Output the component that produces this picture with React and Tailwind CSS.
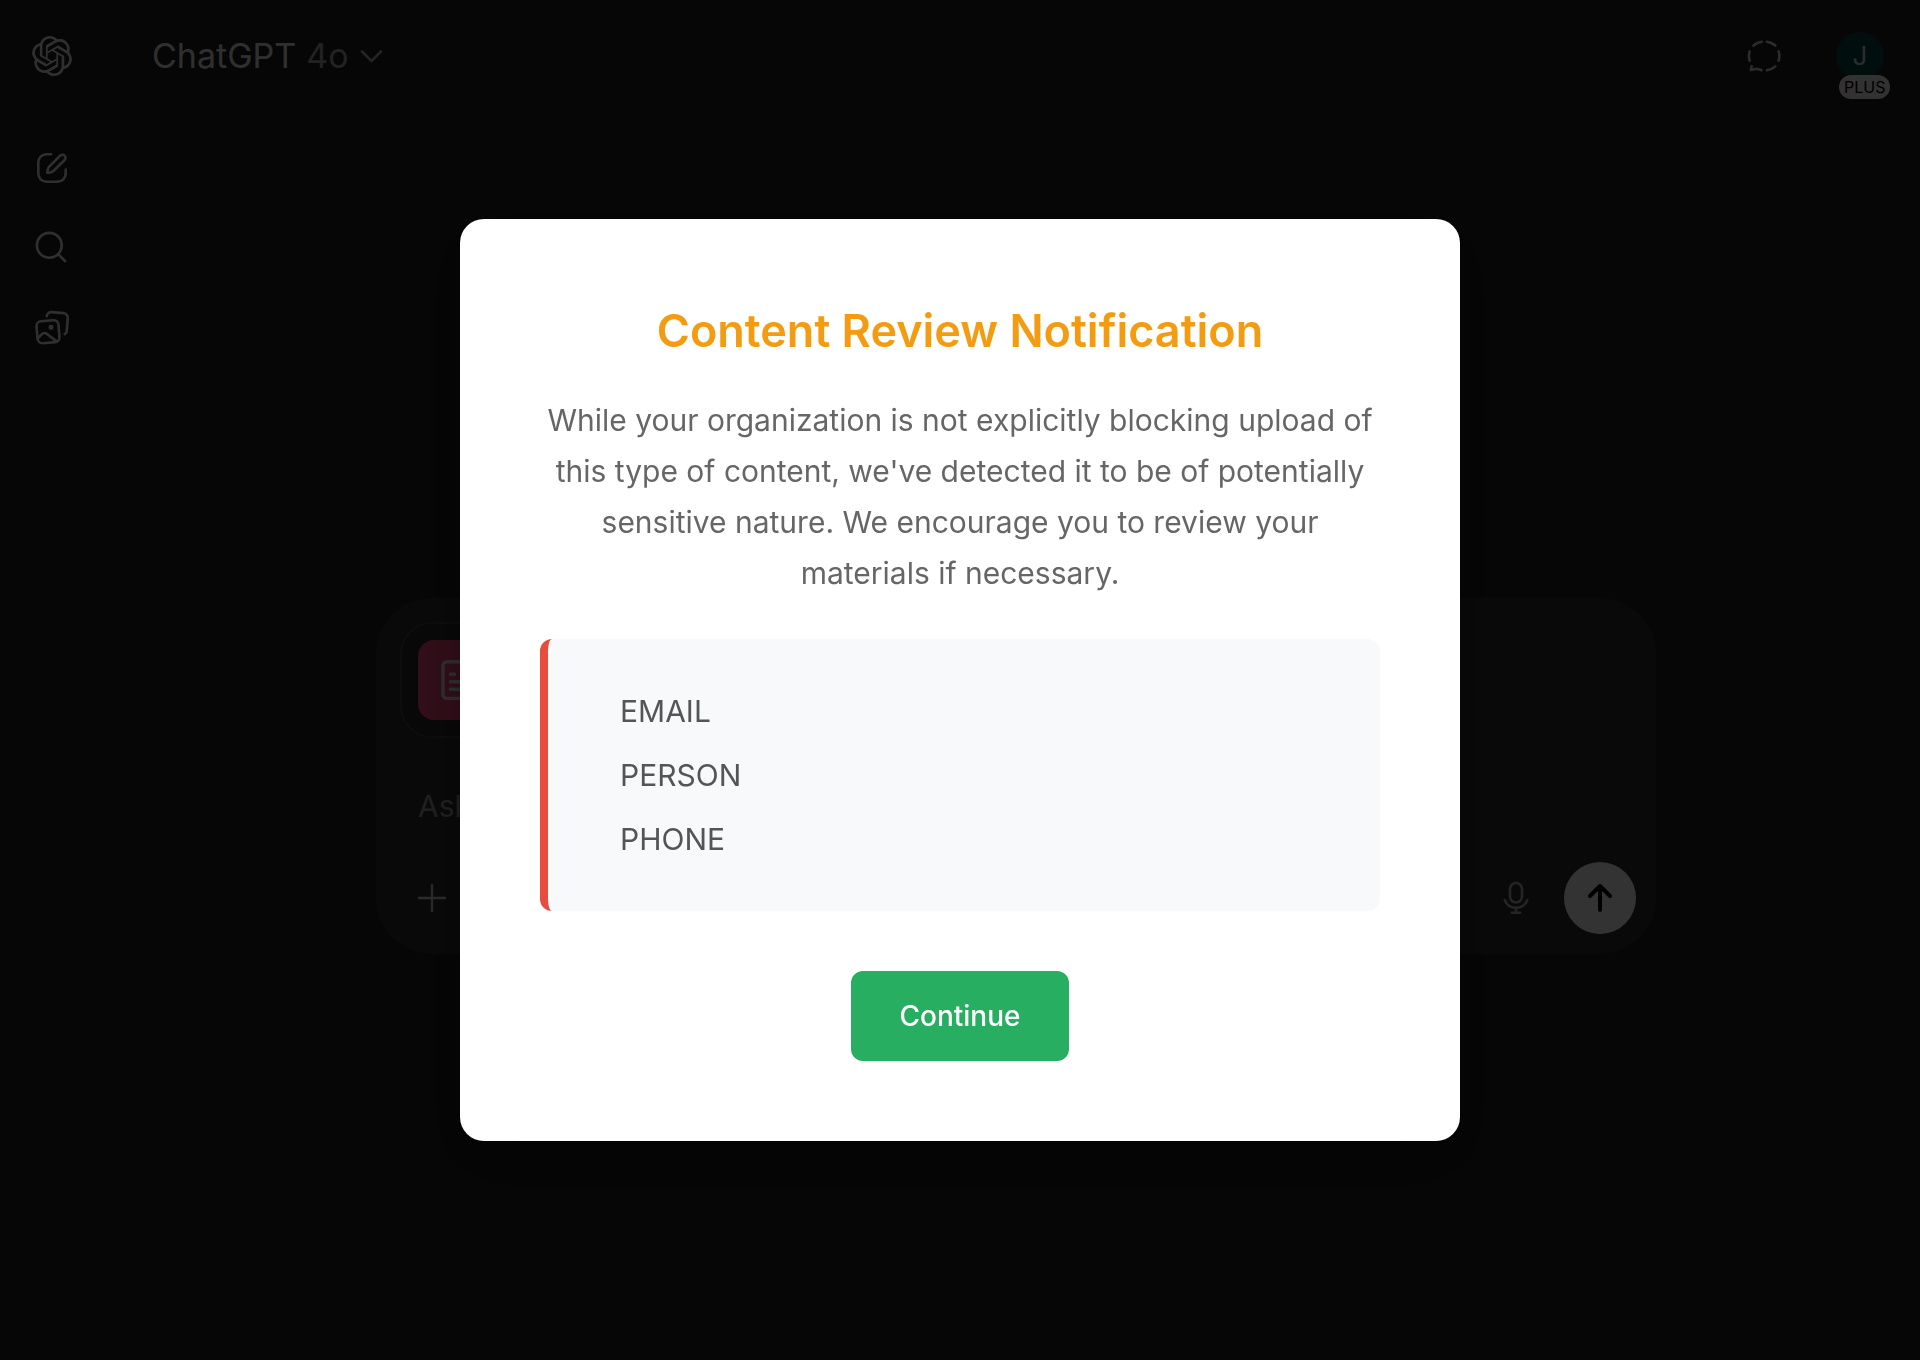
import { useState } from 'react';
import { SiOpenai } from 'react-icons/si';

const detectedTypes = ['EMAIL', 'PERSON', 'PHONE'];

function Icon({ children, className = 'h-10 w-10' }) {
  return (
    <svg
      viewBox="0 0 40 40"
      className={className}
      fill="none"
      stroke="currentColor"
      strokeWidth="2.6"
      strokeLinecap="round"
      strokeLinejoin="round"
      aria-hidden="true"
    >
      {children}
    </svg>
  );
}

function Sidebar() {
  return (
    <nav className="flex w-28 shrink-0 flex-col gap-10 pt-9 pl-8 text-[#ececec]">
      <a href="#home" aria-label="Home" className="mb-8 block h-10 w-10">
        <SiOpenai className="h-10 w-10" />
      </a>
      <button type="button" aria-label="New chat" className="h-10 w-10">
        <Icon>
          <path d="M19 6.3h-4.5a8.2 8.2 0 0 0-8.2 8.2v11a8.2 8.2 0 0 0 8.2 8.2h11a8.2 8.2 0 0 0 8.2-8.2v-4" />
          <path d="M15.3 24.7l.5-3.1a6 6 0 0 1 1.7-3.3L28.2 7.6a3.1 3.1 0 0 1 4.4 4.4L21.6 22.8a6 6 0 0 1-3.2 1.6z" />
        </Icon>
      </button>
      <button type="button" aria-label="Search chats" className="h-10 w-10">
        <Icon>
          <circle cx="17.3" cy="17.3" r="12.4" />
          <path d="M26.3 26.3L33 33" />
        </Icon>
      </button>
      <button type="button" aria-label="Library" className="h-10 w-10">
        <Icon>
          <g transform="rotate(-5 16 23.7)">
            <rect x="5" y="12.7" width="22" height="22" rx="4.8" />
          </g>
          <circle cx="19" cy="19.3" r="2.5" fill="currentColor" stroke="none" />
          <path d="M6.6 29.6l3-3.2a4 4 0 0 1 5.4-.4l9.6 7.4" />
          <path d="M14.7 8.2a4.6 4.6 0 0 1 4.9-4.1l11.8 1a4.8 4.8 0 0 1 4.4 5.3l-1.1 12.8a4 4 0 0 1-2 2.9" />
        </Icon>
      </button>
    </nav>
  );
}

function Header() {
  return (
    <header className="flex h-28 items-center pr-9 pl-10">
      <button type="button" className="flex items-center gap-[10px] text-[34px] leading-10 text-[#ececec]">
        <span>ChatGPT</span>
        <span className="text-[#a8a8a8]">4o</span>
        <svg viewBox="0 0 24 24" className="h-6 w-6 text-[#b4b4b4]" fill="none" stroke="currentColor" strokeWidth="2.6" strokeLinecap="round" strokeLinejoin="round" aria-hidden="true">
          <path d="M3 7.5l9.5 9.5L22 7.5" />
        </svg>
      </button>
      <button type="button" aria-label="Temporary chat" className="ml-auto h-10 w-10 text-[#dcdcdc]">
        <Icon>
          <path d="M9.5 9.5a15 15 0 0 1 8.2-3.8" />
          <path d="M23 5.7a15 15 0 0 1 8.3 3.8" />
          <path d="M5.6 15.4a15 15 0 0 0 0 9.3" />
          <path d="M34.6 15.4a15 15 0 0 1 0 9.3" />
          <path d="M23 34.3a15 15 0 0 0 8.3-3.9" />
          <path d="M7.8 30.2L6.8 34l5.2-1.2q2.8.3 5.5 1.5" />
        </Icon>
      </button>
      <button type="button" aria-label="Account" className="relative ml-13 flex h-12 w-12 items-center justify-center rounded-full bg-[#044a41] text-[26px] leading-8 text-[#dcdcdc]">
        J
        <span className="absolute top-[43px] left-[3px] rounded-full bg-[#f9f9f9] px-[5px] text-base leading-6 text-black">PLUS</span>
      </button>
    </header>
  );
}

function Composer() {
  return (
    <form className="mx-auto flex w-full max-w-[1280px] flex-col rounded-[56px] bg-[#303030] p-5 pl-6">
      <div className="mt-1 flex h-29 w-[640px] items-center rounded-[32px] border-2 border-[#424242] bg-[#2b2b2b] p-4">
        <div className="flex h-20 w-20 items-center justify-center rounded-2xl bg-[#f8487f]">
          <svg viewBox="0 0 40 40" className="h-10 w-10 text-[#ececec]" fill="none" stroke="currentColor" strokeWidth="3.4" strokeLinecap="round" strokeLinejoin="round" aria-hidden="true">
            <rect x="5" y="1.8" width="30" height="36.6" rx="4" />
            <path d="M12.4 14.3h4.200M12.4 21.8h15.500M12.4 29.300h15.500" />
          </svg>
        </div>
      </div>
      <textarea
        aria-label="Message"
        rows={1}
        placeholder="Ask anything"
        className="mt-11 ml-[18px] block h-12 resize-none bg-transparent text-[30px] leading-12 text-white outline-none placeholder:text-[#a3a3a3]"
      />
      <div className="mt-8 flex h-18 items-center text-[#dcdcdc]">
        <button type="button" aria-label="Add" className="ml-3 h-10 w-10">
          <Icon>
            <path d="M20 7v26M7 20h26" strokeWidth="2.3" />
          </Icon>
        </button>
        <button type="button" aria-label="Dictate" className="ml-auto h-10 w-10 text-[#b4b4b4]">
          <Icon>
            <rect x="14" y="5" width="12" height="19.5" rx="6" />
            <path d="M8.8 22c1.8 5 6.2 7.8 11.2 7.8s9.4-2.8 11.2-7.8" />
            <path d="M20 30v4.5M15.8 34.8h8.4" />
          </Icon>
        </button>
        <button type="submit" aria-label="Send" className="ml-7 flex h-18 w-18 items-center justify-center rounded-full bg-white text-black">
          <Icon>
            <path d="M20 8v24M10 18L20 8l10 10" strokeWidth="4" />
          </Icon>
        </button>
      </div>
    </form>
  );
}

function ReviewDialog({ onContinue }) {
  return (
    <div className="fixed inset-0 flex items-center justify-center bg-black/80">
      <div
        role="dialog"
        aria-modal="true"
        aria-labelledby="review-title"
        className="w-full max-w-[1000px] rounded-3xl bg-white p-20 text-center shadow-[0_20px_60px_rgba(0,0,0,0.3)]"
      >
        <h2 id="review-title" className="text-[45px] leading-16 font-semibold text-[#f39c12]">Content Review Notification</h2>
        <p className="mt-8 text-[30px] leading-[51px] text-[#666666]">
          While your organization is not explicitly blocking upload of this type of content, we've detected it to be of
          potentially sensitive nature. We encourage you to review your materials if necessary.
        </p>
        <ul className="mt-10 rounded-xl border-l-8 border-[#e74c3c] bg-[#f8f9fb] py-10 pl-18 text-left text-[30px] leading-16 text-[#555555]">
          {detectedTypes.map((type) => (
            <li key={type}>{type}</li>
          ))}
        </ul>
        <button type="button" onClick={onContinue} className="mt-15 rounded-xl bg-[#27ae60] px-12 py-6 text-[28px] leading-[42px] font-medium text-white">
          Continue
        </button>
      </div>
    </div>
  );
}

export default function App() {
  const [open, setOpen] = useState(true);

  return (
    <div className="flex min-h-screen bg-[#1f1f1f] font-['Inter',sans-serif]">
      <Sidebar />
      <div className="flex min-w-0 flex-1 flex-col">
        <Header />
        <main className="flex flex-1 flex-col justify-center pt-20">
          <Composer />
        </main>
      </div>
      {open && <ReviewDialog onContinue={() => setOpen(false)} />}
    </div>
  );
}
